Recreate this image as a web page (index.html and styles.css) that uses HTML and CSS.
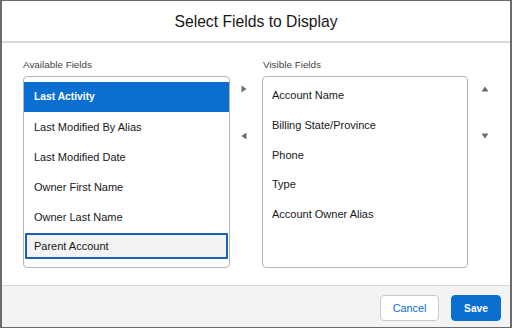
FILE: index.html
```html
<!DOCTYPE html>
<html>
<head>
<meta charset="utf-8">
<link rel="stylesheet" href="styles.css">
</head>
<body>
<div class="modal">
  <header class="modal-header">
    <h2 class="title">Select Fields to Display</h2>
  </header>
  <section class="modal-body">
    <div class="col">
      <div class="label">Available Fields</div>
      <ul class="listbox">
        <li class="option selected">Last Activity</li>
        <li class="option">Last Modified By Alias</li>
        <li class="option">Last Modified Date</li>
        <li class="option">Owner First Name</li>
        <li class="option">Owner Last Name</li>
        <li class="option focused"><span class="focus-box">Parent Account</span></li>
      </ul>
    </div>
    <div class="arrows">
      <svg class="tri" width="6" height="8" viewBox="0 0 6 8"><path d="M0.5 0.5 L5.5 4 L0.5 7.5 Z" fill="#6b6b6b"/></svg>
      <svg class="tri" width="6" height="8" viewBox="0 0 6 8"><path d="M5.5 0.5 L0.5 4 L5.5 7.5 Z" fill="#6b6b6b"/></svg>
    </div>
    <div class="col">
      <div class="label">Visible Fields</div>
      <ul class="listbox listbox-visible">
        <li class="option">Account Name</li>
        <li class="option">Billing State/Province</li>
        <li class="option">Phone</li>
        <li class="option">Type</li>
        <li class="option">Account Owner Alias</li>
      </ul>
    </div>
    <div class="arrows arrows-right">
      <svg class="tri" width="8" height="6" viewBox="0 0 8 6"><path d="M0.5 5.5 L4 0.5 L7.5 5.5 Z" fill="#6b6b6b"/></svg>
      <svg class="tri" width="8" height="6" viewBox="0 0 8 6"><path d="M0.5 0.5 L4 5.5 L7.5 0.5 Z" fill="#6b6b6b"/></svg>
    </div>
  </section>
  <footer class="modal-footer">
    <button class="btn btn-neutral">Cancel</button>
    <button class="btn btn-brand">Save</button>
  </footer>
</div>
</body>
</html>
```
FILE: styles.css
```css
html, body {
  margin: 0;
  padding: 0;
  background: #ffffff;
}
body {
  font-family: "Liberation Sans", Arial, sans-serif;
  color: #181818;
}
.modal {
  box-sizing: border-box;
  width: 512px;
  height: 328px;
  border-top: 1px solid #6b6b6b;
  border-bottom: 1px solid #6b6b6b;
  border-left: 2px solid #6b6b6b;
  border-right: 2px solid #6b6b6b;
  display: flex;
  flex-direction: column;
  background: #fff;
}
.modal-header {
  height: 40px;
  border-bottom: 2px solid #d8d8d8;
  display: flex;
  align-items: center;
  justify-content: center;
}
.title {
  margin: 0;
  font-weight: 400;
  font-size: 15.7px;
  line-height: 20px;
  color: #181818;
  padding-top: 1px;
}
.modal-body {
  flex: 1;
  display: flex;
  padding: 15px 0 0 21px;
}
.col {
  display: flex;
  flex-direction: column;
}
.label {
  font-size: 9.9px;
  line-height: 14px;
  color: #444444;
  margin-bottom: 4px;
  padding-left: 1px;
}
.col:first-child .label { padding-left: 0; }
.listbox {
  list-style: none;
  margin: 0;
  padding: 5px 0 0 0;
  box-sizing: border-box;
  width: 207px;
  height: 192px;
  border: 1px solid #b5b5b5;
  border-radius: 4px;
  overflow: hidden;
}
.listbox-visible {
  width: 206px;
  padding-top: 3px;
}
.option {
  height: 30px;
  line-height: 30px;
  font-size: 11px;
  padding-left: 10px;
  color: #181818;
}
.listbox-visible .option {
  height: 29.8px;
  padding-left: 9px;
}
.option.selected {
  background: #0b6fd1;
  color: #ffffff;
  font-weight: 700;
  font-size: 10.3px;
}
.option.focused {
  padding: 1px 1px 0 1px;
}
.focus-box {
  display: block;
  box-sizing: border-box;
  height: 26px;
  line-height: 22px;
  padding-left: 7px;
  background: #f3f3f3;
  border: 2px solid #1a5fb4;
  border-radius: 1px;
}
.arrows {
  width: 32px;
  display: flex;
  flex-direction: column;
  align-items: flex-start;
  padding-top: 27px;
  padding-left: 11px;
  box-sizing: border-box;
  gap: 39px;
}
.arrows-right {
  padding-left: 13px;
  padding-top: 28px;
  gap: 41px;
}
.tri { display: block; }
.modal-footer {
  height: 42px;
  border-top: 1px solid #d8d8d8;
  background: #f3f3f3;
  display: flex;
  justify-content: flex-end;
  align-items: flex-start;
  padding: 9px 9px 0 0;
  box-sizing: border-box;
  gap: 12px;
}
.btn {
  height: 26px;
  border-radius: 4px;
  font-family: "Liberation Sans", Arial, sans-serif;
  font-size: 10.8px;
  padding: 0;
  box-sizing: border-box;
  cursor: pointer;
}
.btn-neutral {
  width: 59px;
  background: #ffffff;
  border: 1px solid #c9c9c9;
  color: #0b6fd1;
}
.btn-brand {
  width: 50px;
  background: #0b6fd1;
  border: 1px solid #0b6fd1;
  color: #ffffff;
  font-weight: 700;
  font-size: 10.2px;
}
```
